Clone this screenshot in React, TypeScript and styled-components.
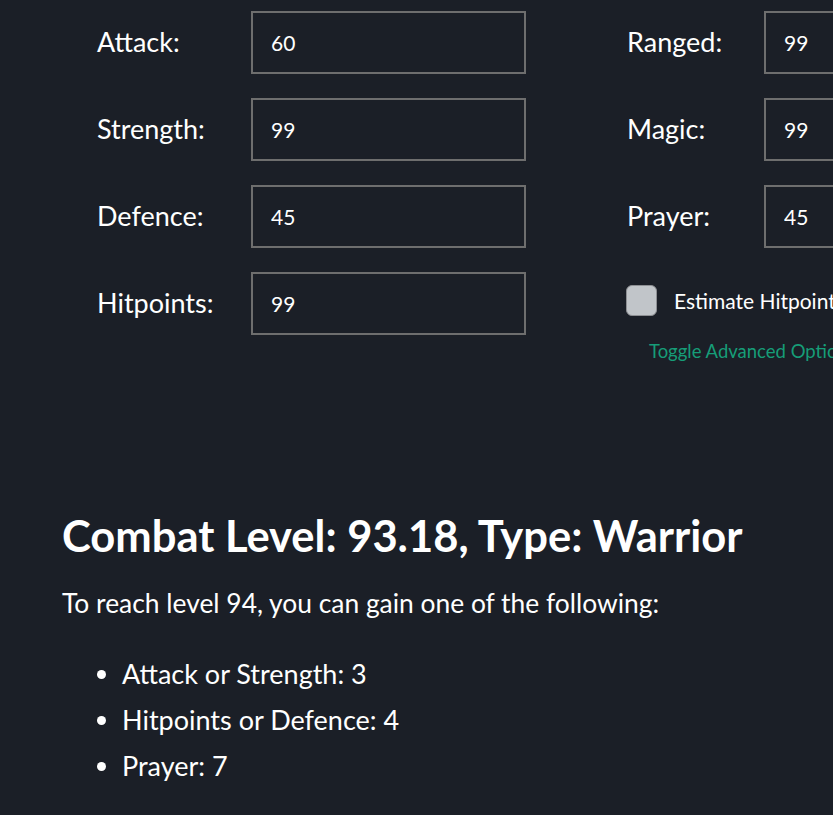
import React, { useState } from 'react';
import styled, { createGlobalStyle } from 'styled-components';

const GlobalStyle = createGlobalStyle`
    html, body {
        margin: 0;
        padding: 0;
        background-color: #1b1f27;
        overflow: hidden;
    }
    body {
        font-family: Lato, "Open Sans", sans-serif;
        color: #ffffff;
    }
`;

const Page = styled.div`
    width: 1100px;
    padding: 11px 0 0 62px;
`;

const StatsForm = styled.div`
    display: flex;
    padding-left: 35px;
`;

const Column = styled.div<{ $width: number }>`
    width: ${(p) => p.$width}px;
    display: flex;
    flex-direction: column;
    gap: 24px;
`;

const Row = styled.div<{ $labelWidth: number }>`
    display: grid;
    grid-template-columns: ${(p) => p.$labelWidth}px 275px;
    align-items: center;
`;

const Label = styled.label`
    font-size: 27px;
    margin-top: -2px;
`;

const Input = styled.input`
    box-sizing: border-box;
    height: 63px;
    width: 275px;
    padding: 0 18px;
    background: transparent;
    border: 2px solid #6e6e6e;
    color: #ffffff;
    font-family: Lato, sans-serif;
    font-size: 21px;
    outline: none;
`;

const CheckRow = styled.div`
    height: 63px;
    margin-top: -3px;
    display: flex;
    align-items: center;
    gap: 17px;
`;

const Box = styled.span`
    box-sizing: border-box;
    width: 31px;
    height: 31px;
    margin-left: -1px;
    border-radius: 6px;
    background: #c1c5c9;
    border: 1px solid #8d8f93;
`;

const CheckText = styled.span`
    font-size: 21px;
    white-space: nowrap;
`;

const ToggleLink = styled.a`
    margin: -16px 0 0 22px;
    color: #169d78;
    font-size: 18.5px;
    white-space: nowrap;
    cursor: pointer;
`;

const Result = styled.section`
    padding-top: 147px;
`;

const Heading = styled.h2`
    margin: 0 0 26px;
    font-size: 43.5px;
    font-weight: 700;
`;

const Text = styled.p`
    margin: 0 0 32px;
    font-size: 26.4px;
`;

const List = styled.ul`
    margin: 0;
    padding-left: 60px;
    font-size: 27px;
    li {
        line-height: 46px;
    }
`;

const left = [
    ['Attack', '60'],
    ['Strength', '99'],
    ['Defence', '45'],
    ['Hitpoints', '99'],
];

const right = [
    ['Ranged', '99'],
    ['Magic', '99'],
    ['Prayer', '45'],
];

export default function App() {
    const [values, setValues] = useState<{ [key: string]: string }>(
        Object.fromEntries([...left, ...right])
    );

    const change = (name: string, value: string) => {
        setValues({ ...values, [name]: value });
    };

    return (
        <Page>
            <GlobalStyle />
            <StatsForm>
                <Column $width={530}>
                    {left.map(([name]) => (
                        <Row key={name} $labelWidth={154}>
                            <Label>{name}:</Label>
                            <Input value={values[name]} onChange={(e) => change(name, e.target.value)} />
                        </Row>
                    ))}
                </Column>
                <Column $width={450}>
                    {right.map(([name]) => (
                        <Row key={name} $labelWidth={137}>
                            <Label>{name}:</Label>
                            <Input value={values[name]} onChange={(e) => change(name, e.target.value)} />
                        </Row>
                    ))}
                    <CheckRow>
                        <Box />
                        <CheckText>Estimate Hitpoints</CheckText>
                    </CheckRow>
                    <ToggleLink>Toggle Advanced Options</ToggleLink>
                </Column>
            </StatsForm>
            <Result>
                <Heading>Combat Level: 93.18, Type: Warrior</Heading>
                <Text>To reach level 94, you can gain one of the following:</Text>
                <List>
                    <li>Attack or Strength: 3</li>
                    <li>Hitpoints or Defence: 4</li>
                    <li>Prayer: 7</li>
                </List>
            </Result>
        </Page>
    );
}
